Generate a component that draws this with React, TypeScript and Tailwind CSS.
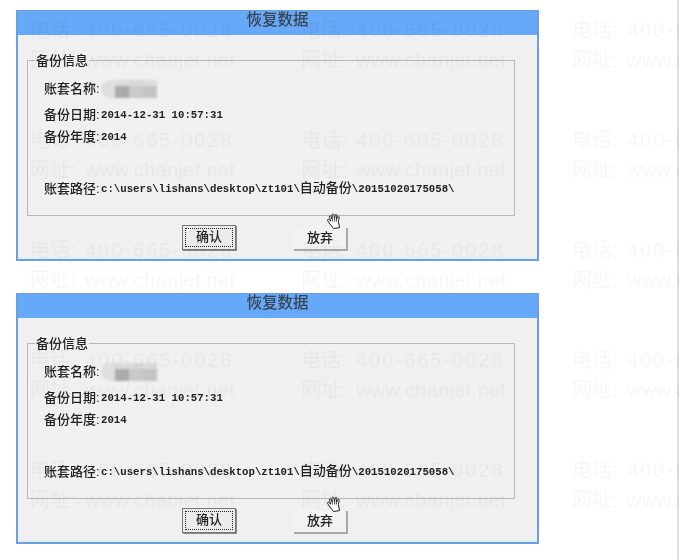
const WATERMARK_ROWS = [30, 140, 250, 360, 470];
const WATERMARK_COLS = [30, 301, 572];

function Mosaic() {
  return (
    <div className="grid h-[18px] w-[56px] grid-cols-[14px_14px_14px_14px] grid-rows-[6px_12px] overflow-hidden rounded-l-[9px] blur-[0.8px]">
      <div className="bg-[#e0e0e0]" />
      <div className="bg-[#dcdcdc]" />
      <div className="bg-[#d8d8d8]" />
      <div className="bg-[#dcdcdc]" />
      <div className="bg-[#dedede]" />
      <div className="bg-[#ababab]" />
      <div className="bg-[#cacaca]" />
      <div className="bg-[#c4c4c4]" />
    </div>
  );
}

function HandCursor() {
  return (
    <svg viewBox="0 0 18 18" className="absolute left-[308px] top-[201px] h-[18px] w-[18px] blur-[0.3px]">
      <path
        d="M7.5 16.5 L4 12 L1.6 8.6 C1 7.6 2.2 6.8 3 7.6 L4.6 9 L3.4 4.8 C3.2 3.7 4.6 3.3 5 4.3 L6.2 7 L6 2.9 C6 1.8 7.6 1.7 7.8 2.8 L8.6 6.6 L9.2 3 C9.4 2 10.9 2.2 10.8 3.3 L10.5 7.2 L11.8 4.6 C12.3 3.8 13.5 4.3 13.2 5.3 L12.4 9.5 L13 13 L13.6 15.6 Z"
        fill="#fff"
        stroke="#222"
        strokeWidth="1"
        strokeLinejoin="round"
      />
      <path d="M6.2 7 L6.6 9.6 M8.6 6.6 L8.7 9.4 M10.5 7.2 L10.4 9.6" fill="none" stroke="#222" strokeWidth="0.8" />
    </svg>
  );
}

function Label({ text }: { text: string }) {
  return (
    <span className="w-[57px] shrink-0 text-[13px] font-medium text-[#222]">
      {text}
      <span className="[font-family:'Liberation_Sans',sans-serif]">:</span>
    </span>
  );
}

function RestoreDialog() {
  return (
    <div className="relative flex h-[251px] w-[523px] flex-col border-2 border-t border-[#6a9fe0] bg-[#f0f0f0] shadow-[inset_0_-2px_0_#e4f0f8]">
      <div className="flex h-[24px] shrink-0 items-center justify-center bg-[#66a9f8] pb-[3px] text-[15.5px] font-medium text-[#3a4450]">
        恢复数据
      </div>
      <div className="flex flex-1 flex-col pl-[9px] pr-[22px]">
        <fieldset className="mt-[17px] h-[164px] border border-[#b8b8b8] pl-[16px]">
          <legend className="-ml-[9px] px-[1px] pt-[3px] text-[13px] font-medium leading-[14px] text-[#222]">备份信息</legend>
          <div className="mt-[11px] flex h-[18px] items-center">
            <Label text="账套名称" />
            <Mosaic />
          </div>
          <div className="mt-[8px] flex h-[18px] items-center text-[10.7px] font-bold text-[#222]">
            <Label text="备份日期" />
            2014-12-31 10:57:31
          </div>
          <div className="mt-[4px] flex h-[18px] items-center text-[10.7px] font-bold text-[#222]">
            <Label text="备份年度" />
            2014
          </div>
          <div className="mt-[34px] flex h-[18px] items-center whitespace-nowrap text-[10.7px] font-bold text-[#222]">
            <Label text="账套路径" />
            c:\users\lishans\desktop\zt101\
            <span className="text-[13px] font-medium">自动备份</span>
            \20151020175058\
          </div>
        </fieldset>
        <div className="mt-[9px] flex items-start pl-[155px] text-[13px] font-medium text-[#222]">
          <div className="h-[25px] w-[54px] border border-[#777] bg-[#ececec] p-[2px] shadow-[1px_1px_0_#888]">
            <div className="flex h-full items-center justify-center border border-dotted border-[#222]">确认</div>
          </div>
          <div className="ml-[58px] mt-[3px] flex h-[23px] w-[54px] items-center justify-center border-r-2 border-b-2 border-[#a9a9a9] bg-[#f2f2f2]">
            放弃
          </div>
        </div>
      </div>
      <HandCursor />
    </div>
  );
}

export default function App() {
  return (
    <div className="relative h-[560px] w-[680px] overflow-hidden bg-white pl-[16px] pt-[10px] [font-family:'Liberation_Mono','Noto_Sans_CJK_SC',monospace]">
      <div className="flex flex-col gap-[32px] blur-[0.35px]">
        <RestoreDialog />
        <RestoreDialog />
      </div>

      {/* scroll edge on the right */}
      <div className="absolute bottom-0 left-[677px] top-0 w-[2px] bg-[#dedede]" />

      {/* watermark lies over everything */}
      <div className="pointer-events-none absolute inset-0 blur-[0.4px]">
        {WATERMARK_ROWS.map((y) =>
          WATERMARK_COLS.map((x) => (
            <div
              key={`${x}-${y}`}
              className="absolute whitespace-nowrap text-[20px] leading-[30px] text-black/[0.035] [font-family:'Liberation_Sans','Noto_Sans_CJK_SC',sans-serif]"
              style={{ left: x, top: y - 15 }}
            >
              <div className="flex">
                <span className="w-[55px]">电话:</span>
                <span className="tracking-[2px]">400-665-0028</span>
              </div>
              <div className="flex">
                <span className="w-[55px]">网址:</span>
                <span className="tracking-[0.3px]">www.chanjet.net</span>
              </div>
            </div>
          ))
        )}
      </div>
    </div>
  );
}
